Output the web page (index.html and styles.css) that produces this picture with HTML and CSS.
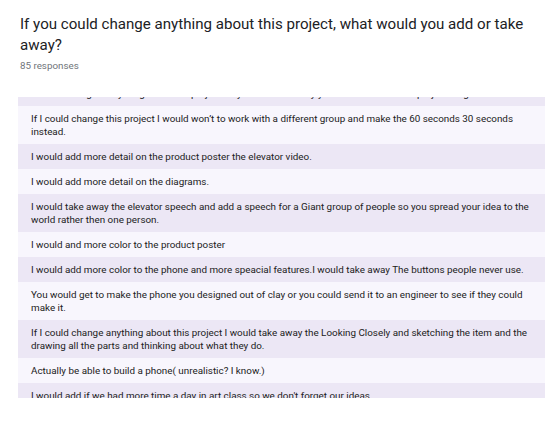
FILE: index.html
```html
<!DOCTYPE html>
<html>
<head>
<meta charset="utf-8">
<link rel="stylesheet" href="styles.css">
</head>
<body>
<div class="card">
  <div class="header">
    <h1 class="title">If you could change anything about this project, what would you add or take away?</h1>
    <div class="count">85 responses</div>
  </div>
  <div class="list">
    <div class="list-inner">
      <div class="row row-cut">I would change everything about the project so you could work by yourself and make the project longer.</div>
      <div class="row">If I could change this project I would won’t to work with a different group and make the 60 seconds 30 seconds instead.</div>
      <div class="row">I would add more detail on the product poster the elevator video.</div>
      <div class="row">I would add more detail on the diagrams.</div>
      <div class="row">I would take away the elevator speech and add a speech for a Giant group of people so you spread your idea to the world rather then one person.</div>
      <div class="row">I would and more color to the product poster</div>
      <div class="row">I would add more color to the phone and more speacial features.I would take away The buttons people never use.</div>
      <div class="row">You would get to make the phone you designed out of clay or you could send it to an engineer to see if they could make it.</div>
      <div class="row">If I could change anything about this project I would take away the Looking Closely and sketching the item and the drawing all the parts and thinking about what they do.</div>
      <div class="row">Actually be able to build a phone( unrealistic? I know.)</div>
      <div class="row">I would add if we had more time a day in art class so we don't forget our ideas.</div>
      <div class="row">I would add more time to work on the project.</div>
    </div>
  </div>
</div>
</body>
</html>
```

FILE: styles.css
```css
html, body {
  margin: 0;
  padding: 0;
  background: #ffffff;
}

body {
  font-family: Roboto, "Liberation Sans", Arial, sans-serif;
  color: #202124;
}

.card {
  width: 560px;
}

.header {
  padding: 14px 0 0 20px;
}

.title {
  margin: 0;
  font-size: 15.1px;
  font-weight: 400;
  line-height: 21px;
  color: #202124;
  width: 530px;
}

.count {
  margin-top: 3px;
  font-size: 9.8px;
  line-height: 13px;
  color: #70757a;
}

.list {
  margin: 25px 0 0 18px;
  width: 527px;
  height: 301px;
  overflow: hidden;
}

.list-inner {
  display: flex;
  flex-direction: column;
}

.row {
  padding: 6px 13px 6px 13px;
  font-size: 9.85px;
  line-height: 13px;
  color: #212121;
  background: #f8f6fd;
}

.row:nth-child(odd) {
  background: #ece7f5;
}

.row-cut {
  margin-top: -16px;
}
```
